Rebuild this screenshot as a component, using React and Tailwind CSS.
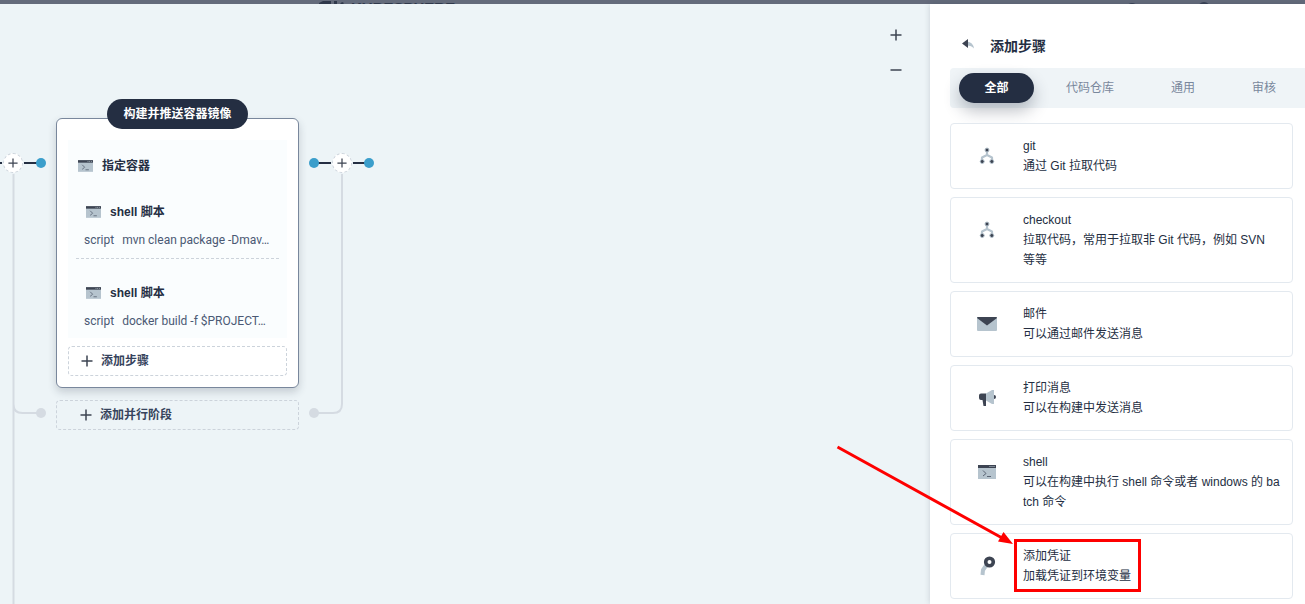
import React from "react";

const steps = [
  { icon: "branch", title: "git", text: "通过 Git 拉取代码" },
  { icon: "branch", title: "checkout", text: "拉取代码，常用于拉取非 Git 代码，例如 SVN 等等" },
  { icon: "mail", title: "邮件", text: "可以通过邮件发送消息" },
  { icon: "horn", title: "打印消息", text: "可以在构建中发送消息" },
  { icon: "terminal", title: "shell", text: "可以在构建中执行 shell 命令或者 windows 的 batch 命令" },
  { icon: "key", title: "添加凭证", text: "加载凭证到环境变量", marked: true },
];

function Terminal({ className }) {
  return (
    <svg viewBox="0 0 18 14" className={className} aria-hidden="true">
      <rect width="18" height="14" fill="#b6c4ce" />
      <rect width="18" height="3" fill="#3d4452" />
      <path d="M11.5 1h1v1h-1zM13.5 1h1v1h-1zM15.5 1h1v1h-1z" fill="#b6c4ce" />
      <path d="M5 5.5 8 8.5 5 11M9 11.5h4" fill="none" stroke="#5b6575" strokeWidth="1" />
    </svg>
  );
}

function StepIcon({ name }) {
  if (name === "terminal") return <Terminal className="h-3.5 w-[18px]" />;
  return (
    <svg viewBox="0 0 20 20" className="size-5" aria-hidden="true">
      {name === "branch" && (
        <>
          <path d="M10 4v5M5 15v-3.500L10 9l5 2.500V15" fill="none" stroke="#b6c4ce" strokeWidth="2.200" strokeLinejoin="round" />
          <g fill="#3d4452" stroke="#b6c4ce" strokeWidth="1">
            <circle cx="10" cy="4" r="2" />
            <circle cx="5.200" cy="15.500" r="2" />
            <circle cx="14.800" cy="15.500" r="2" />
          </g>
        </>
      )}
      {name === "mail" && (
        <>
          <rect y="3" width="20" height="14" rx="1" fill="#b6c4ce" />
          <path d="M1 3h18a1 1 0 0 1 1 1L10 11.500 0 4a1 1 0 0 1 1-1z" fill="#3d4452" />
        </>
      )}
      {name === "horn" && (
        <>
          <path d="M9 5.500 15 2h2v14h-2l-6-3.500z" fill="#b6c4ce" />
          <path d="M17 7a2 2 0 0 1 0 4z" fill="#3d4452" />
          <path d="M4 5.500h5V18H6.500L5.500 12H4a2 2 0 0 1-2-2V7.500a2 2 0 0 1 2-2z" fill="#3d4452" />
        </>
      )}
      {name === "key" && (
        <>
          <path d="M9.500 9 6 14 5.500 19" fill="none" stroke="#b6c4ce" strokeWidth="4" />
          <circle cx="12.500" cy="6" r="3.800" fill="#fff" stroke="#3d4452" strokeWidth="3.600" />
        </>
      )}
    </svg>
  );
}

function Plus({ className = "size-3" }) {
  return (
    <svg viewBox="0 0 12 12" className={className} aria-hidden="true">
      <path d="M6 .5v11M.5 6h11" fill="none" stroke="#3d4452" strokeWidth="1.500" />
    </svg>
  );
}

function InsertButton({ className }) {
  return (
    <button
      type="button"
      aria-label="添加阶段"
      className={`absolute flex size-5 items-center justify-center rounded-full border border-dashed border-[#ccd3db] bg-white ${className}`}
    >
      <Plus className="size-2.5" />
    </button>
  );
}

function ShellStep({ command }) {
  return (
    <div className="mx-2 flex flex-col gap-2.5 border-b border-dashed border-[#ccd3db] pt-6 pb-2.5 last:border-b-0 last:pb-[9px]">
      <div className="flex h-5 items-center gap-[9px] pl-2.5 font-bold text-[#242e42]">
        <Terminal className="h-3 w-[15px]" />
        shell 脚本
      </div>
      <div className="flex h-4 items-center gap-2 pl-2 font-['Roboto',sans-serif] whitespace-nowrap text-[#4a5974]">
        <span>script</span>
        <span>{command}</span>
      </div>
    </div>
  );
}

function Stage() {
  return (
    <section className="flex w-[243px] flex-col pt-[95px]">
      <h2 className="z-10 flex h-[30px] items-center self-center rounded-full bg-[#242e42] px-4 font-bold text-white">
        构建并推送容器镜像
      </h2>
      <div className="-mt-[11px] rounded-md border border-[#79879c] bg-white px-[11px] pt-[21px] pb-[11px] shadow-[0_4px_8px_rgba(36,46,66,0.2)]">
        <div className="bg-[#fafdfe]">
          <div className="flex h-[38px] items-center gap-[9px] pt-3.5 pl-2.5 font-bold text-[#242e42]">
            <Terminal className="h-3 w-[15px]" />
            指定容器
          </div>
          <ShellStep command="mvn clean package -Dmav…" />
          <ShellStep command="docker build -f $PROJECT…" />
        </div>
        <button
          type="button"
          className="mt-2 flex h-[30px] w-full items-center gap-2 rounded border border-dashed border-[#ccd3db] px-3 font-bold text-[#36435c]"
        >
          <Plus />
          添加步骤
        </button>
      </div>
      <button
        type="button"
        className="mt-3 flex h-[30px] w-full items-center gap-2 rounded border border-dashed border-[#ccd3db] px-[23px] font-bold text-[#36435c]"
      >
        <Plus />
        添加并行阶段
      </button>
    </section>
  );
}

function Canvas() {
  return (
    <main className="relative flex min-w-0 flex-1 bg-[#edf4f7]">
      <div className="relative w-14 shrink-0">
        <svg className="h-[600px] w-14" viewBox="0 0 56 600" aria-hidden="true">
          <path d="M13.500 160V600M13.500 400q0 9 9 9H41" fill="none" stroke="#d5dbe2" strokeWidth="2" />
          <path d="M0 159H41" stroke="#242e42" strokeWidth="2" />
          <circle cx="13" cy="159" r="11" fill="#edf4f7" />
          <circle cx="41" cy="159" r="5" fill="#3b9ecb" />
          <circle cx="41" cy="409" r="5" fill="#d5dbe2" />
        </svg>
        <InsertButton className="top-[149px] left-[3px]" />
      </div>
      <Stage />
      <div className="relative w-20 shrink-0">
        <svg className="h-[600px] w-20" viewBox="0 0 80 600" aria-hidden="true">
          <path d="M43 160V400q0 9-9 9H15" fill="none" stroke="#d5dbe2" strokeWidth="2" />
          <path d="M15 159H70" stroke="#242e42" strokeWidth="2" />
          <circle cx="43" cy="159" r="11" fill="#edf4f7" />
          <circle cx="15" cy="159" r="5" fill="#3b9ecb" />
          <circle cx="70" cy="159" r="5" fill="#3b9ecb" />
          <circle cx="15" cy="409" r="5" fill="#d5dbe2" />
        </svg>
        <InsertButton className="top-[149px] left-[33px]" />
      </div>
      <div className="ml-auto flex flex-col gap-[11px] pt-[19px] pr-[22px]">
        <button type="button" aria-label="放大" className="flex size-6 items-center justify-center">
          <Plus />
        </button>
        <button type="button" aria-label="缩小" className="flex size-6 items-center justify-center">
          <svg viewBox="0 0 12 12" className="size-3" aria-hidden="true">
            <path d="M.5 6h11" stroke="#3d4452" strokeWidth="1.500" />
          </svg>
        </button>
      </div>
    </main>
  );
}

function StepCard({ icon, title, text, marked }) {
  return (
    <li className="relative">
      <button
        type="button"
        className="flex w-full rounded border border-[#e3e9ef] bg-white py-3 pr-3 text-left leading-5 text-[#242e42]"
      >
        <span className="flex h-10 w-[72px] shrink-0 items-center justify-center">
          <StepIcon name={icon} />
        </span>
        <span className="min-w-0 flex-1 break-all">
          <span className="block">{title}</span>
          <span className="block">{text}</span>
        </span>
      </button>
      {marked && (
        <>
          <span className="absolute top-1.5 left-16 h-[53px] w-[127px] border-3 border-[#fe0000]" />
          <svg className="absolute -top-[88px] -left-[114px] h-[102px] w-[180px]" viewBox="0 0 180 102" aria-hidden="true">
            <path d="M1.500 2 168 94" stroke="#fe0000" strokeWidth="3" />
            <path d="M177 99 162 96.500 167.500 87z" fill="#fe0000" />
          </svg>
        </>
      )}
    </li>
  );
}

function StepPanel() {
  return (
    <aside className="relative flex w-[375px] shrink-0 flex-col bg-white pt-[30px] pl-5 shadow-[0_0_6px_rgba(36,46,66,0.18)]">
      <div className="flex h-6 items-center gap-4 pl-3">
        <button type="button" aria-label="返回" className="pb-1">
          <svg viewBox="0 0 12 10" className="h-2.5 w-3" aria-hidden="true">
            <path d="M5 2.500Q11 3 12 9.500 9.500 6.500 5 6.500z" fill="#b6c4ce" />
            <path d="M0 4.500 6 0v9z" fill="#3d4452" />
          </svg>
        </button>
        <h1 className="text-sm font-bold text-[#242e42]">添加步骤</h1>
      </div>
      <nav className="mt-2.5 flex h-10 items-center rounded-l bg-[#eff4f7] pl-[9px] whitespace-nowrap text-[#79879c]">
        <button
          type="button"
          className="h-[30px] w-[75px] rounded-full bg-[#242e42] font-bold text-white shadow-[0_8px_16px_rgba(36,46,66,0.3)]"
        >
          全部
        </button>
        <button type="button" className="ml-8">代码仓库</button>
        <button type="button" className="ml-[57px]">通用</button>
        <button type="button" className="ml-[57px]">审核</button>
      </nav>
      <ul className="mt-[15px] mr-3 flex flex-col gap-2">
        {steps.map((step) => (
          <StepCard key={step.title} {...step} />
        ))}
      </ul>
    </aside>
  );
}

export default function App() {
  return (
    <div className="flex h-screen flex-col overflow-hidden font-['Liberation_Sans','Noto_Sans_CJK_SC',sans-serif] text-xs">
      <header className="flex h-1 shrink-0 items-start justify-between overflow-hidden bg-[#646b7b] pr-[95px] pl-[318px]">
        <span className="flex items-start gap-1.5 text-[15px] leading-4 font-bold text-[#2f384b]">
          <svg viewBox="0 0 27 16" className="h-4 w-[27px]" aria-hidden="true">
            <path d="M1 3 5 1h8v15H1zM16 1h3v6l5-5 2 1-7 8v5h-3z" fill="#2f384b" />
          </svg>
          KUBESPHERE
        </span>
        <svg viewBox="0 0 84 16" className="h-4 w-[84px]" aria-hidden="true">
          <circle cx="6" cy="9" r="6" fill="#3a4356" />
          <circle cx="78" cy="8" r="6" fill="#3a4356" />
        </svg>
      </header>
      <div className="flex min-h-0 flex-1">
        <Canvas />
        <StepPanel />
      </div>
    </div>
  );
}
